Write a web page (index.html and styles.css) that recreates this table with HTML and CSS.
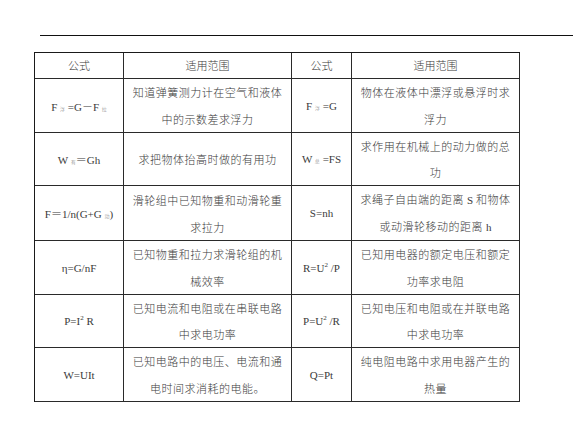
FILE: index.html
```html
<!DOCTYPE html>
<html lang="zh">
<head>
<meta charset="utf-8">
<link rel="stylesheet" href="styles.css">
</head>
<body>
<div class="page">
  <div class="rule"></div>
  <table class="formulas">
    <colgroup>
      <col class="c-f">
      <col class="c-d">
      <col class="c-f2">
      <col class="c-d">
    </colgroup>
    <tr class="head">
      <td class="cjk">公式</td>
      <td class="cjk">适用范围</td>
      <td class="cjk">公式</td>
      <td class="cjk">适用范围</td>
    </tr>

    <tr class="tall">
      <td class="fx" rowspan="2">F <span class="sub">浮</span> =G<span class="cjk">－</span>F <span class="sub">拉</span></td>
      <td class="cjk l1">知道弹簧测力计在空气和液体</td>
      <td class="fx" rowspan="2">F <span class="sub">浮</span> =G</td>
      <td class="cjk l1">物体在液体中漂浮或悬浮时求</td>
    </tr>
    <tr>
      <td class="cjk l2">中的示数差求浮力</td>
      <td class="cjk l2">浮力</td>
    </tr>

    <tr>
      <td class="fx" rowspan="2">W <span class="sub">有</span><span class="cjk">＝</span>Gh</td>
      <td class="cjk one" rowspan="2">求把物体抬高时做的有用功</td>
      <td class="fx" rowspan="2">W <span class="sub">总</span> =FS</td>
      <td class="cjk l1">求作用在机械上的动力做的总</td>
    </tr>
    <tr>
      <td class="cjk l2">功</td>
    </tr>

    <tr>
      <td class="fx" rowspan="2">F<span class="cjk">＝</span>1/n(G+G <span class="sub">动</span>)</td>
      <td class="cjk l1">滑轮组中已知物重和动滑轮重</td>
      <td class="fx" rowspan="2">S=nh</td>
      <td class="cjk l1">求绳子自由端的距离 <span class="lat">S</span> 和物体</td>
    </tr>
    <tr>
      <td class="cjk l2">求拉力</td>
      <td class="cjk l2">或动滑轮移动的距离 <span class="lat">h</span></td>
    </tr>

    <tr class="tall">
      <td class="fx" rowspan="2">η=G/nF</td>
      <td class="cjk l1">已知物重和拉力求滑轮组的机</td>
      <td class="fx" rowspan="2">R=U<sup>2</sup> /P</td>
      <td class="cjk l1">已知用电器的额定电压和额定</td>
    </tr>
    <tr>
      <td class="cjk l2">械效率</td>
      <td class="cjk l2">功率求电阻</td>
    </tr>

    <tr>
      <td class="fx" rowspan="2">P=I<sup>2</sup> R</td>
      <td class="cjk l1">已知电流和电阻或在串联电路</td>
      <td class="fx" rowspan="2">P=U<sup>2</sup> /R</td>
      <td class="cjk l1">已知电压和电阻或在并联电路</td>
    </tr>
    <tr>
      <td class="cjk l2">中求电功率</td>
      <td class="cjk l2">中求电功率</td>
    </tr>

    <tr class="tall">
      <td class="fx" rowspan="2">W=UIt</td>
      <td class="cjk l1">已知电路中的电压、电流和通</td>
      <td class="fx" rowspan="2">Q=Pt</td>
      <td class="cjk l1">纯电阻电路中求用电器产生的</td>
    </tr>
    <tr>
      <td class="cjk l2">电时间求消耗的电能。</td>
      <td class="cjk l2">热量</td>
    </tr>
  </table>
</div>
</body>
</html>
```
FILE: styles.css
```css
html, body {
  margin: 0;
  padding: 0;
  background: #fff;
}
.page {
  padding-top: 35px;
}
.rule {
  margin-left: 40px;
  border-top: 1px solid #111;
  height: 0;
}
.formulas {
  margin-top: 16px;
  margin-left: 34px;
  border-collapse: separate;
  border-spacing: 0;
  table-layout: fixed;
  width: 486px;
  border-top: 1px solid #1a1a1a;
  border-left: 1px solid #1a1a1a;
}
.c-f { width: 89px; }
.c-d { width: 168px; }
.c-f2 { width: 60px; }
.formulas td {
  border-right: 1px solid #2a2a2a;
  border-bottom: 1px solid #2a2a2a;
  text-align: center;
  vertical-align: middle;
  padding: 0;
  color: #3a3a3a;
  white-space: nowrap;
}
.head td {
  line-height: 25px;
}
.formulas td.l1 {
  border-bottom: none;
  line-height: 26px;
}
.formulas td.l2 {
  line-height: 26px;
}
.tall td.l1 {
  line-height: 27px;
}
.cjk {
  font-family: "Noto Sans CJK SC", sans-serif;
  font-weight: 300;
  font-size: 11px;
}
.l1, .l2, .one {
  letter-spacing: 0.5px;
}
.lat {
  font-family: "Liberation Serif", serif;
  font-size: 11px;
  letter-spacing: 0;
}
.fx {
  font-family: "Liberation Serif", serif;
  font-size: 11px;
}
.sub {
  font-family: "Noto Sans CJK SC", sans-serif;
  font-size: 5px;
  font-weight: 300;
  color: #777;
}
sup {
  font-size: 7px;
  line-height: 0;
}
```
